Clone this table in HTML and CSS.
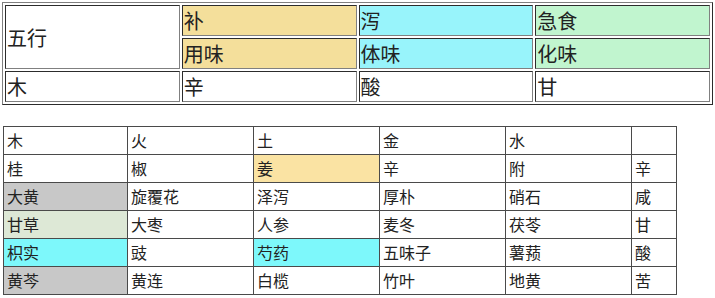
FILE: index.html
```html
<!DOCTYPE html>
<html>
<head>
<meta charset="utf-8">
<link rel="stylesheet" href="styles.css">
</head>
<body>
<table class="wx">
  <tr>
    <td class="c1" rowspan="2">五行</td>
    <td class="y">补</td>
    <td class="b">泻</td>
    <td class="g">急食</td>
  </tr>
  <tr>
    <td class="y">用味</td>
    <td class="b">体味</td>
    <td class="g">化味</td>
  </tr>
  <tr>
    <td>木</td>
    <td>辛</td>
    <td>酸</td>
    <td>甘</td>
  </tr>
</table>
<table class="herbs">
  <tr><td>木</td><td>火</td><td>土</td><td>金</td><td>水</td><td class="last"></td></tr>
  <tr><td>桂</td><td>椒</td><td class="hy">姜</td><td>辛</td><td>附</td><td class="last">辛</td></tr>
  <tr><td class="hg">大黄</td><td>旋覆花</td><td>泽泻</td><td>厚朴</td><td>硝石</td><td class="last">咸</td></tr>
  <tr><td class="hl">甘草</td><td>大枣</td><td>人参</td><td>麦冬</td><td>茯苓</td><td class="last">甘</td></tr>
  <tr><td class="hc">枳实</td><td>豉</td><td class="hc">芍药</td><td>五味子</td><td>薯蓣</td><td class="last">酸</td></tr>
  <tr><td class="hg">黄芩</td><td>黄连</td><td>白榄</td><td>竹叶</td><td>地黄</td><td class="last">苦</td></tr>
</table>
</body>
</html>
```

FILE: styles.css
```css
html, body {
  margin: 0;
  padding: 0;
  background: #fff;
}
body {
  padding: 2px 0 0 2px;
  font-family: "Noto Sans CJK SC", "Noto Sans", sans-serif;
  color: #222;
}
.wx {
  width: 711px;
  table-layout: fixed;
  border: 1px outset gray;
  border-spacing: 2px;
  border-collapse: separate;
  font-size: 20px;
}
.wx td {
  border: 1px inset gray;
  padding: 1px;
  height: 27px;
  line-height: 27px;
  vertical-align: middle;
  text-align: left;
}
.wx .y { background: #f4df9b; }
.wx .b { background: #98f4fb; }
.wx .g { background: #c1f5cf; }
.herbs {
  margin-top: 21px;
  margin-left: 1px;
  border-collapse: collapse;
  font-size: 16px;
}
.herbs td {
  width: 119px;
  border: 1px solid #4a4a4a;
  padding: 1px 3px;
  height: 25px;
  line-height: 25px;
  box-sizing: content-box;
}
.herbs td:first-child { width: 117px; }
.herbs td.last { width: 38px; }
.herbs .hy { background: #fae3a3; }
.herbs .hg { background: #c8c8c8; }
.herbs .hl { background: #dde8d6; }
.herbs .hc { background: #7df8fb; }
```
